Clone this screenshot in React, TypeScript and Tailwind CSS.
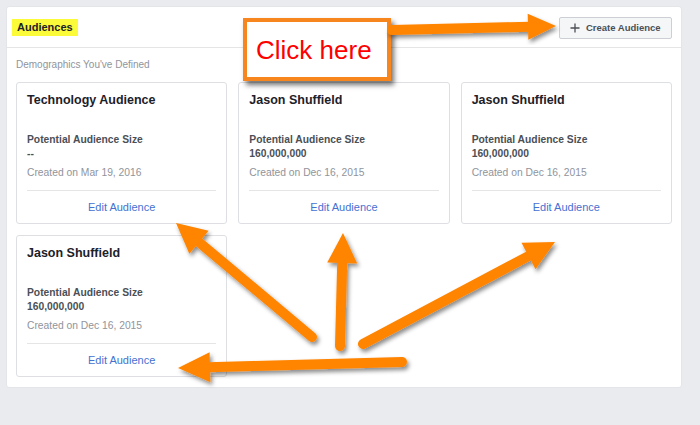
import React from "react";

type Pt = [number, number];

function arrowPoints(tail: Pt, tip: Pt, headLen: number, halfW: number) {
  const dx = tip[0] - tail[0];
  const dy = tip[1] - tail[1];
  const len = Math.hypot(dx, dy);
  const ux = dx / len;
  const uy = dy / len;
  const nx = -uy;
  const ny = ux;
  const bx = tip[0] - ux * headLen;
  const by = tip[1] - uy * headLen;
  const head = [
    [tip[0], tip[1]],
    [bx + nx * halfW, by + ny * halfW],
    [bx - nx * halfW, by - ny * halfW],
  ]
    .map((p) => p.join(","))
    .join(" ");
  return { head, shaftEnd: [bx + ux * 2, by + uy * 2] as Pt };
}

function Arrow({ tail, tip, headLen = 30, halfW = 15, shaftW = 10 }: { tail: Pt; tip: Pt; headLen?: number; halfW?: number; shaftW?: number }) {
  const a = arrowPoints(tail, tip, headLen, halfW);
  return (
    <g filter="url(#sh)">
      <line
        x1={tail[0]}
        y1={tail[1]}
        x2={a.shaftEnd[0]}
        y2={a.shaftEnd[1]}
        stroke="#ff8400"
        strokeWidth={shaftW}
        strokeLinecap="round"
      />
      <polygon points={a.head} fill="#ff8400" />
    </g>
  );
}

function Card({ title, size, date }: { title: string; size: string; date: string }) {
  return (
    <div className="h-[142px] border border-[#dddfe2] rounded-[3px] bg-white flex flex-col px-[10px] pt-[9px]">
      <div className="text-[12.5px] leading-[16px] font-bold text-[#1d2129]">{title}</div>
      <div className="mt-[25px] text-[10.3px] leading-[14px] font-bold text-[#4b4f56]">Potential Audience Size</div>
      <div className="text-[10.3px] leading-[14px] font-bold text-[#4b4f56]">{size}</div>
      <div className="mt-[5px] text-[10.3px] leading-[14px] text-[#90949c]">{date}</div>
      <div className="mt-[10px] h-px bg-[#e5e5e5]" />
      <div className="flex-1 flex items-center justify-center text-[11px] text-[#4471d2]">Edit Audience</div>
    </div>
  );
}

export default function App() {
  return (
    <div
      className="relative w-[700px] h-[425px] bg-[#e9ebee] p-[6px] overflow-hidden"
      style={{ fontFamily: '"Liberation Sans", Arial, sans-serif' }}
    >
      <div className="w-[676px] bg-white border border-[#e3e5e8] rounded-[3px]">
        <div className="h-[41px] border-b border-[#e5e5e5] flex items-center justify-between pl-[5px] pr-[9px]">
          <span className="bg-[#fbfb3a] px-[5px] h-[17px] flex items-center text-[11px] font-bold text-[#1d2129]">Audiences</span>
          <div className="w-[113px] h-[22px] mt-[2px] bg-[#f5f6f7] border border-[#ccd0d5] rounded-[2px] flex items-center pl-[10px] gap-[6px]">
            <svg width="10" height="10" viewBox="0 0 10 10">
              <path d="M5 0.5v9M0.5 5h9" stroke="#4b4f56" strokeWidth="1.3" />
            </svg>
            <span className="text-[9.5px] font-bold text-[#4b4f56]">Create Audience</span>
          </div>
        </div>
        <div className="pt-[11px] px-[9px] pb-[10px]">
          <div className="text-[10px] leading-[12px] text-[#90949c] mb-[11px]">Demographics You've Defined</div>
          <div className="grid grid-cols-3 gap-[11px]">
            <Card title="Technology Audience" size="--" date="Created on Mar 19, 2016" />
            <Card title="Jason Shuffield" size="160,000,000" date="Created on Dec 16, 2015" />
            <Card title="Jason Shuffield" size="160,000,000" date="Created on Dec 16, 2015" />
            <Card title="Jason Shuffield" size="160,000,000" date="Created on Dec 16, 2015" />
          </div>
        </div>
      </div>

      <div className="absolute left-[243px] top-[18px] w-[148px] h-[63px] border-[4px] border-[#f7861e] bg-white shadow-[3px_4px_5px_rgba(0,0,0,0.55)] flex items-center pl-[9px]">
        <span className="text-[26px] leading-none text-[#ff0000]">Click here</span>
      </div>

      <svg className="absolute left-0 top-0 pointer-events-none" width="700" height="425" viewBox="0 0 700 425">
        <defs>
          <filter id="sh" x="-20%" y="-20%" width="140%" height="140%">
            <feDropShadow dx="2" dy="3" stdDeviation="2" floodColor="#000" floodOpacity="0.45" />
          </filter>
        </defs>
        <Arrow tail={[392, 30]} tip={[556, 26]} headLen={28} halfW={13} shaftW={10} />
        <Arrow tail={[312, 337]} tip={[176, 223]} />
        <Arrow tail={[340, 346]} tip={[343, 233]} />
        <Arrow tail={[363, 344]} tip={[555, 242]} />
        <Arrow tail={[402, 362]} tip={[178, 368]} headLen={32} />
      </svg>
    </div>
  );
}
